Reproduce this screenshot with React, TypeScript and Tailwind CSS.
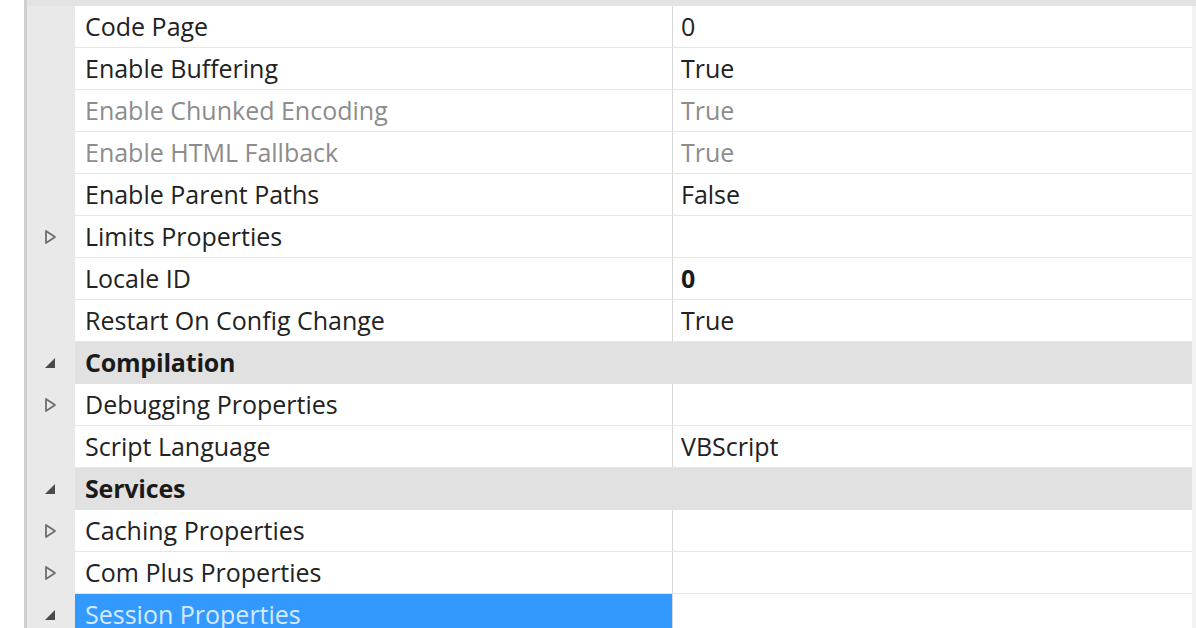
import React from 'react'

type Row = {
  name: string
  value?: string
  kind?: 'prop' | 'category'
  expander?: 'open' | 'closed'
  disabled?: boolean
  boldValue?: boolean
  selected?: boolean
}

const ROWS: Row[] = [
  { name: 'Code Page', value: '0' },
  { name: 'Enable Buffering', value: 'True' },
  { name: 'Enable Chunked Encoding', value: 'True', disabled: true },
  { name: 'Enable HTML Fallback', value: 'True', disabled: true },
  { name: 'Enable Parent Paths', value: 'False' },
  { name: 'Limits Properties', expander: 'closed' },
  { name: 'Locale ID', value: '0', boldValue: true },
  { name: 'Restart On Config Change', value: 'True' },
  { name: 'Compilation', kind: 'category', expander: 'open' },
  { name: 'Debugging Properties', expander: 'closed' },
  { name: 'Script Language', value: 'VBScript' },
  { name: 'Services', kind: 'category', expander: 'open' },
  { name: 'Caching Properties', expander: 'closed' },
  { name: 'Com Plus Properties', expander: 'closed' },
  { name: 'Session Properties', expander: 'open', selected: true },
]

function Expander({ state }: { state: 'open' | 'closed' }) {
  if (state === 'closed') {
    return (
      <svg width="13" height="16" viewBox="0 0 13 16">
        <path d="M2 2 L11 8 L2 14 Z" fill="none" stroke="#6e6e6e" strokeWidth="1.8" strokeLinejoin="round" />
      </svg>
    )
  }
  return (
    <svg width="12" height="12" viewBox="0 0 12 12">
      <path d="M11 1 L11 11 L1 11 Z" fill="#4a4a4a" />
    </svg>
  )
}

export default function App() {
  return (
    <div
      className="w-[1196px] h-[628px] overflow-hidden bg-white flex"
      style={{ fontFamily: '"Open Sans", "Noto Sans", sans-serif' }}
    >
      <div className="w-[24px] shrink-0 bg-white" />
      <div className="w-[3px] shrink-0 bg-[#cfcfcf]" />
      <div className="flex-1 flex flex-col">
        <div className="h-[6px] shrink-0 bg-[#e3e3e3]" />
        {ROWS.map((r) => {
          const cat = r.kind === 'category'
          return (
            <div key={r.name} className="h-[42px] shrink-0 flex">
              <div className="w-[48px] shrink-0 bg-[#e9e9e9] flex items-center justify-center pr-[2px]">
                {r.expander && <Expander state={r.expander} />}
              </div>
              {cat ? (
                <div className="flex-1 flex items-center bg-[#e1e1e1] pl-[10px]">
                  <span className="text-[25px] font-bold text-[#1a1a1a] tracking-[-0.2px]">{r.name}</span>
                </div>
              ) : (
                <>
                  <div
                    className={`w-[598px] shrink-0 flex items-center pl-[10px] border-r border-[#d8d8d8] ${
                      r.selected ? 'bg-[#3399ff]' : 'bg-white border-b border-b-[#e6e6e6]'
                    }`}
                  >
                    <span
                      className={`text-[25px] ${
                        r.selected
                          ? 'text-[#d6eaff]'
                          : r.disabled
                          ? 'text-[#8c8c8c]'
                          : 'text-[#222222] font-medium'
                      }`}
                    >
                      {r.name}
                    </span>
                  </div>
                  <div className="flex-1 flex items-center pl-[8px] bg-white border-b border-[#e6e6e6]">
                    {r.value && (
                      <span
                        className={`text-[25px] ${
                          r.boldValue
                            ? 'font-bold text-[#1a1a1a]'
                            : r.disabled
                            ? 'text-[#8c8c8c]'
                            : 'text-[#222222] font-medium'
                        }`}
                      >
                        {r.value}
                      </span>
                    )}
                  </div>
                </>
              )}
              <div className="w-[4px] shrink-0 bg-[#f3f3f3]" />
            </div>
          )
        })}
      </div>
    </div>
  )
}
